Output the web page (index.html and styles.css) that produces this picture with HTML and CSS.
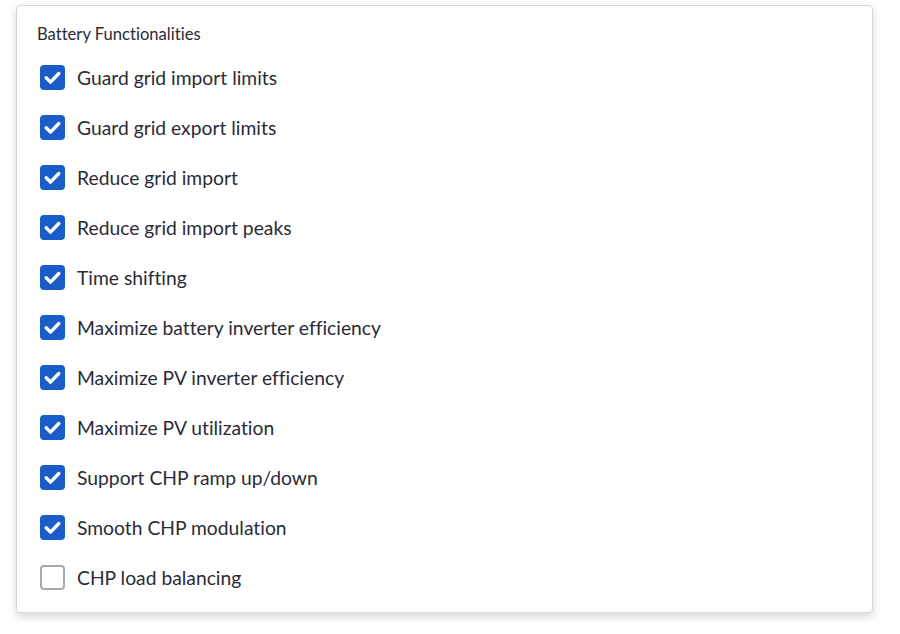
FILE: index.html
```html
<!DOCTYPE html>
<html>
<head>
<meta charset="utf-8">
<link rel="stylesheet" href="styles.css">
</head>
<body>
<div class="card">
  <div class="title">Battery Functionalities</div>
  <ul class="list">
    <li class="item"><span class="box checked"><svg viewBox="0 0 25 25"><path d="M6.2 12.8l4.3 4.3 8.3-8.6"/></svg></span><span class="label">Guard grid import limits</span></li>
    <li class="item"><span class="box checked"><svg viewBox="0 0 25 25"><path d="M6.2 12.8l4.3 4.3 8.3-8.6"/></svg></span><span class="label">Guard grid export limits</span></li>
    <li class="item"><span class="box checked"><svg viewBox="0 0 25 25"><path d="M6.2 12.8l4.3 4.3 8.3-8.6"/></svg></span><span class="label">Reduce grid import</span></li>
    <li class="item"><span class="box checked"><svg viewBox="0 0 25 25"><path d="M6.2 12.8l4.3 4.3 8.3-8.6"/></svg></span><span class="label">Reduce grid import peaks</span></li>
    <li class="item"><span class="box checked"><svg viewBox="0 0 25 25"><path d="M6.2 12.8l4.3 4.3 8.3-8.6"/></svg></span><span class="label">Time shifting</span></li>
    <li class="item"><span class="box checked"><svg viewBox="0 0 25 25"><path d="M6.2 12.8l4.3 4.3 8.3-8.6"/></svg></span><span class="label">Maximize battery inverter efficiency</span></li>
    <li class="item"><span class="box checked"><svg viewBox="0 0 25 25"><path d="M6.2 12.8l4.3 4.3 8.3-8.6"/></svg></span><span class="label">Maximize PV inverter efficiency</span></li>
    <li class="item"><span class="box checked"><svg viewBox="0 0 25 25"><path d="M6.2 12.8l4.3 4.3 8.3-8.6"/></svg></span><span class="label">Maximize PV utilization</span></li>
    <li class="item"><span class="box checked"><svg viewBox="0 0 25 25"><path d="M6.2 12.8l4.3 4.3 8.3-8.6"/></svg></span><span class="label">Support CHP ramp up/down</span></li>
    <li class="item"><span class="box checked"><svg viewBox="0 0 25 25"><path d="M6.2 12.8l4.3 4.3 8.3-8.6"/></svg></span><span class="label">Smooth CHP modulation</span></li>
    <li class="item"><span class="box"></span><span class="label">CHP load balancing</span></li>
  </ul>
</div>
</body>
</html>
```

FILE: styles.css
```css
html, body {
  margin: 0;
  padding: 0;
  background: #ffffff;
}
body {
  padding: 5px 0 21px 16px;
  font-family: "Lato", "Open Sans", sans-serif;
  font-variant-ligatures: none;
  color: #2b2b38;
}
.card {
  width: 857px;
  height: 608px;
  box-sizing: border-box;
  border: 1px solid #d6d6d6;
  border-radius: 4px;
  box-shadow: 0 4px 10px rgba(0, 0, 0, 0.16);
  padding: 14px 20px 0 20px;
}
.title {
  font-size: 16.6px;
  line-height: 28px;
  color: #2b2b38;
}
.list {
  list-style: none;
  margin: 4px 0 0 3px;
  padding: 0;
}
.item {
  display: flex;
  align-items: center;
  height: 50px;
  gap: 12px;
}
.box {
  width: 25px;
  height: 25px;
  box-sizing: border-box;
  border-radius: 4px;
  border: 2px solid #a9a9ad;
  background: #fff;
  flex: none;
  position: relative;
}
.box.checked {
  background: #1a5dc8;
  border-color: #1a5dc8;
}
.box svg {
  position: absolute;
  left: -2px;
  top: -2px;
  width: 25px;
  height: 25px;
  fill: none;
  stroke: #ffffff;
  stroke-width: 3.4;
  stroke-linecap: round;
  stroke-linejoin: round;
}
.label {
  font-size: 19.3px;
  color: #2b2b38;
}
```
